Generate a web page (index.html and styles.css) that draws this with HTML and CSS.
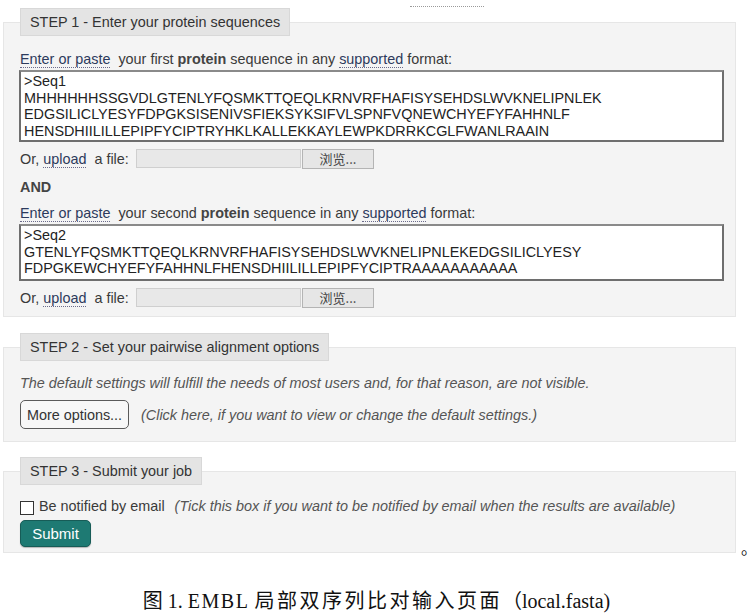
FILE: index.html
```html
<!DOCTYPE html>
<html>
<head>
<meta charset="utf-8">
<link rel="stylesheet" href="styles.css">
</head>
<body>
<div class="page">
  <div class="dotline"></div>

  <fieldset class="step step1">
    <legend class="step-title">STEP 1 - Enter your protein sequences</legend>
    <div class="prompt"><span class="link">Enter or paste</span>&nbsp; your first <b>protein</b> sequence in any <span class="link">supported</span> format:</div>
    <textarea class="seq seq1" spellcheck="false">&gt;Seq1
MHHHHHHSSGVDLGTENLYFQSMKTTQEQLKRNVRFHAFISYSEHDSLWVKNELIPNLEK
EDGSILICLYESYFDPGKSISENIVSFIEKSYKSIFVLSPNFVQNEWCHYEFYFAHHNLF
HENSDHIILILLEPIPFYCIPTRYHKLKALLEKKAYLEWPKDRRKCGLFWANLRAAIN</textarea>
    <div class="upload">
      <span>Or, <span class="link">upload</span>&nbsp; a file:</span>
      <span class="filebox"></span><span class="browse">浏览...</span>
    </div>
    <div class="and">AND</div>
    <div class="prompt"><span class="link">Enter or paste</span>&nbsp; your second <b>protein</b> sequence in any <span class="link">supported</span> format:</div>
    <textarea class="seq seq2" spellcheck="false">&gt;Seq2
GTENLYFQSMKTTQEQLKRNVRFHAFISYSEHDSLWVKNELIPNLEKEDGSILICLYESY
FDPGKEWCHYEFYFAHHNLFHENSDHIILILLEPIPFYCIPTRAAAAAAAAAAA</textarea>
    <div class="upload">
      <span>Or, <span class="link">upload</span>&nbsp; a file:</span>
      <span class="filebox"></span><span class="browse">浏览...</span>
    </div>
  </fieldset>

  <fieldset class="step step2">
    <legend class="step-title">STEP 2 - Set your pairwise alignment options</legend>
    <div class="note">The default settings will fulfill the needs of most users and, for that reason, are not visible.</div>
    <div class="options-row">
      <button class="more">More options...</button>
      <span class="note">(Click here, if you want to view or change the default settings.)</span>
    </div>
  </fieldset>

  <div class="last-row">
    <fieldset class="step step3">
      <legend class="step-title">STEP 3 - Submit your job</legend>
      <div class="notify">
        <span class="check"></span>
        <span>Be notified by email</span>
        <span class="note">(Tick this box if you want to be notified by email when the results are available)</span>
      </div>
      <button class="submit">Submit</button>
    </fieldset>
    <span class="period">。</span>
  </div>

  <div class="caption">图 1. <span class="latin">EMBL</span> <span class="cjk">局部双序列比对输入页面</span>（local.fasta)</div>
</div>
</body>
</html>
```

FILE: styles.css
```css
html, body {
  margin: 0;
  padding: 0;
  background: #ffffff;
  overflow: hidden;
}

.page {
  width: 749px;
  font-family: "Liberation Sans", Arial, sans-serif;
  font-size: 14.4px;
  line-height: 18px;
  color: #3a3a3a;
}

.dotline {
  margin: 6px 0 0 410px;
  width: 74px;
  height: 0;
  border-top: 1px dotted #9a9a9a;
}

.step {
  margin: 1px 0 0 3px;
  width: 733px;
  box-sizing: border-box;
  padding: 14px 11px 8px 16px;
  background: #f4f4f4;
  border: 1px solid #e6e6e6;
  min-width: 0;
}

.step-title {
  padding: 4px 9px;
  margin: 0;
  background: #e4e4e4;
  border: 1px solid #d8d8d8;
  color: #333333;
  font-size: 14.4px;
  line-height: 18px;
}

.link {
  color: #2d3a5c;
  border-bottom: 1px dotted #6a6a8a;
}

.prompt b {
  font-weight: bold;
  color: #444;
}

.seq {
  display: block;
  box-sizing: border-box;
  width: 705px;
  margin: 2px 0 0 -1px;
  padding: 1px 3px 3px;
  border: 2px solid #6e6e6e;
  border-top-color: #8a8a8a;
  background: #ffffff;
  font-family: "Liberation Sans", Arial, sans-serif;
  font-size: 14.4px;
  line-height: 16.5px;
  color: #222222;
  resize: none;
  overflow: hidden;
  white-space: pre;
}

.seq1 { height: 72px; }
.seq2 { height: 57px; }

.upload {
  display: flex;
  align-items: center;
  margin-top: 6px;
  height: 21px;
}

.upload > span:first-child {
  width: 116px;
}

.filebox {
  width: 165px;
  height: 19px;
  box-sizing: border-box;
  background: #e8e8e8;
  border: 1px solid #cfcfcf;
}

.browse {
  width: 72px;
  height: 20px;
  box-sizing: border-box;
  background: #e6e6e6;
  border: 1px solid #b4b4b4;
  font-family: "Noto Sans CJK SC", "Liberation Sans", sans-serif;
  font-size: 13px;
  line-height: 18px;
  text-align: center;
  color: #444;
  margin-left: 1px;
}

.and {
  margin-top: 9px;
  font-weight: bold;
  color: #444;
}

.and + .prompt {
  margin-top: 8px;
}

.step2 {
  margin-top: 16px;
  padding: 13px 11px 12px 16px;
}

.note {
  font-style: italic;
  color: #555555;
}

.options-row {
  display: flex;
  align-items: center;
  margin-top: 8px;
}

.more {
  margin: 0 12px 0 0;
  width: 109px;
  height: 29px;
  box-sizing: border-box;
  background: #f7f7f7;
  border: 1px solid #5a5a5a;
  border-radius: 5px;
  font-family: "Liberation Sans", Arial, sans-serif;
  font-size: 14.4px;
  color: #333;
  padding: 0;
}

.last-row {
  display: flex;
  align-items: flex-end;
  margin-top: 15px;
}

.step3 {
  margin-top: 0;
  flex-shrink: 0;
  padding: 12px 11px 5px 16px;
}

.notify {
  display: flex;
  align-items: center;
  gap: 5px;
}

.notify .note {
  margin-left: 5px;
}

.check {
  width: 14px;
  height: 14px;
  box-sizing: border-box;
  border: 1px solid #333;
  background: #ffffff;
  margin-top: 4px;
}

.submit {
  display: block;
  margin: 5px 0 0 0;
  width: 71px;
  height: 27px;
  background: #1e7a73;
  border: 1px solid #175c57;
  border-radius: 5px;
  box-shadow: 0 1px 1px rgba(0,0,0,0.25);
  color: #ffffff;
  font-family: "Liberation Sans", Arial, sans-serif;
  font-size: 15px;
  padding: 0;
}

.period {
  flex-shrink: 0;
  font-family: "Noto Sans CJK SC", sans-serif;
  font-size: 16px;
  line-height: 16px;
  letter-spacing: -9px;
  color: #111;
  margin-left: 5px;
  margin-bottom: -2px;
}

.caption {
  margin-top: 36px;
  text-align: center;
  font-family: "Liberation Serif", "Noto Sans CJK SC", serif;
  font-size: 20px;
  line-height: 24px;
  color: #111;
  padding-left: 4px;
}

.caption .latin {
  letter-spacing: 1.5px;
}

.caption .cjk {
  letter-spacing: 2.5px;
}
```
